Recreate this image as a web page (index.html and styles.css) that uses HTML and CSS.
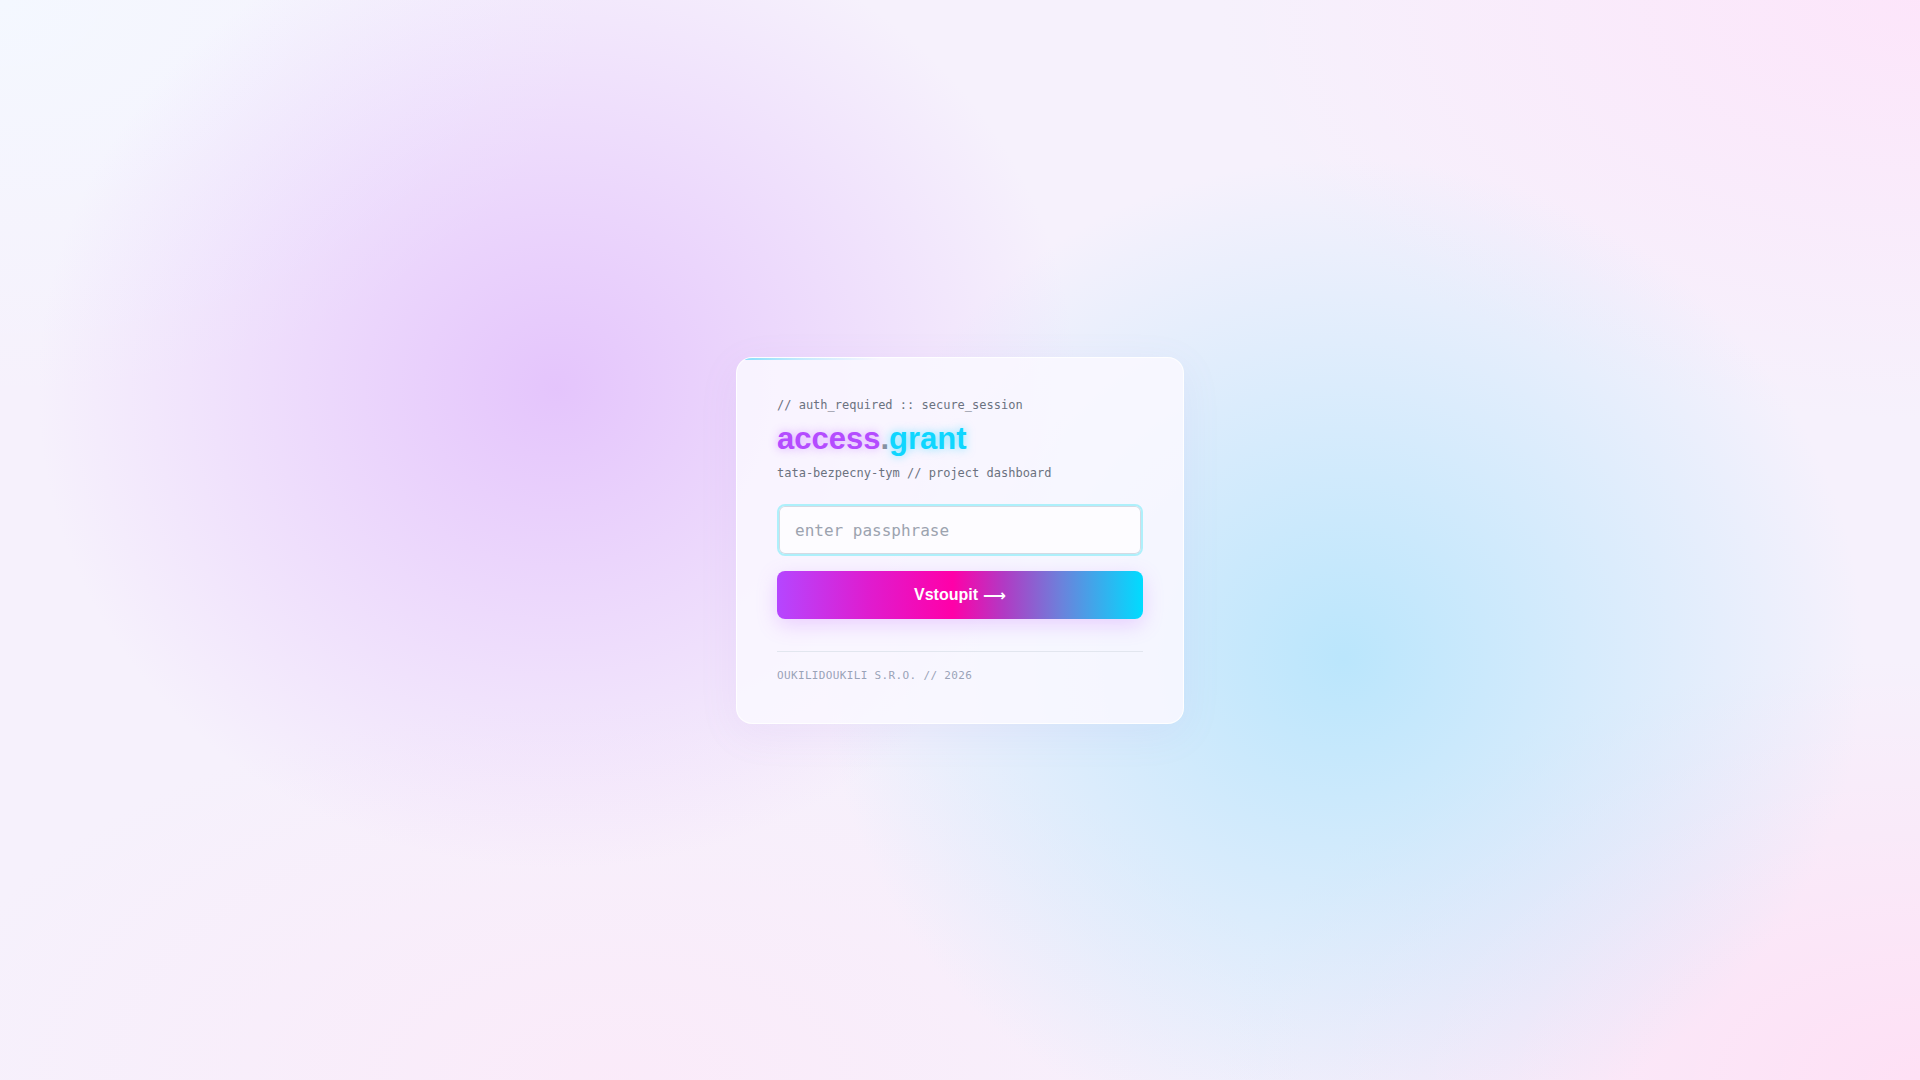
FILE: index.html
```html
<!DOCTYPE html>
<html lang="cs">
<head>
<meta charset="utf-8">
<title>access.grant</title>
<link rel="stylesheet" href="styles.css">
</head>
<body>
<main class="stage">
  <section class="card">
    <p class="kicker">// auth_required :: secure_session</p>
    <h1 class="title"><span class="t-a">access</span><span class="t-dot">.</span><span class="t-b">grant</span></h1>
    <p class="sub">tata-bezpecny-tym // project dashboard</p>
    <form class="form">
      <input class="pass" type="password" placeholder="enter passphrase">
      <button class="btn" type="button">Vstoupit <span class="arrow">⟶</span></button>
    </form>
    <div class="divider"></div>
    <p class="foot">OUKILIDOUKILI S.R.O. // 2026</p>
  </section>
</main>
</body>
</html>
```

FILE: styles.css
```css
* { box-sizing: border-box; }
html, body { margin: 0; height: 100%; }
body {
  font-family: "DejaVu Sans Mono", "Liberation Mono", monospace;
  background-color: #f6f1fc;
  background-image:
    radial-gradient(ellipse 520px 480px at 29% 36%, rgba(214, 160, 252, 0.55), rgba(214, 160, 252, 0) 100%),
    radial-gradient(ellipse 520px 500px at 70% 61%, rgba(176, 228, 252, 0.85), rgba(176, 228, 252, 0) 100%),
    radial-gradient(ellipse 700px 420px at 100% 100%, rgba(255, 222, 244, 0.9), rgba(255, 222, 244, 0) 100%),
    radial-gradient(ellipse 700px 420px at 100% 0%, rgba(253, 228, 250, 0.9), rgba(253, 228, 250, 0) 100%),
    radial-gradient(ellipse 700px 380px at 32% 100%, rgba(252, 232, 248, 0.7), rgba(252, 232, 248, 0) 100%),
    radial-gradient(ellipse 600px 400px at 0% 0%, rgba(244, 248, 255, 1), rgba(244, 248, 255, 0) 100%);
}
.stage {
  min-height: 100vh;
  display: flex;
  align-items: center;
  justify-content: center;
  padding-top: 1px;
}
.card {
  position: relative;
  overflow: hidden;
  width: 448px;
  padding: 39px 40px 39px;
  border-radius: 16px;
  background: rgba(250, 248, 255, 0.86);
  border: 1px solid rgba(255, 255, 255, 0.9);
  box-shadow: 0 10px 40px rgba(170, 130, 220, 0.08);
}
.card::before {
  content: "";
  position: absolute;
  left: 0; top: 0;
  width: 100%; height: 2px;
  background: linear-gradient(90deg, rgba(120, 220, 250, 0.9) 0%, rgba(150, 225, 250, 0.5) 15%, rgba(200, 230, 255, 0) 32%);
}
.kicker {
  margin: 0;
  font-size: 12px;
  line-height: 16px;
  color: #6b7280;
}
.title {
  margin: 8px 0 0;
  font-family: "Liberation Sans", Arial, sans-serif;
  font-weight: 700;
  font-size: 31px;
  line-height: 36px;
  letter-spacing: 0;
}
.t-a { color: #b44cff; text-shadow: 0 0 10px rgba(180, 76, 255, 0.45); }
.t-dot { color: #8a8fa0; }
.t-b { color: #0fd6ff; text-shadow: 0 0 10px rgba(0, 214, 255, 0.5); }
.sub {
  margin: 8px 0 0;
  font-size: 12px;
  line-height: 16px;
  color: #6b7280;
}
.form {
  margin-top: 23px;
  display: flex;
  flex-direction: column;
  gap: 15px;
}
.pass {
  width: 100%;
  height: 52px;
  padding: 0 16px;
  border-radius: 8px;
  border: 2px solid #aef0fb;
  box-shadow: inset 0 0 0 1px #d3dae4;
  background: #fdfcff;
  font-family: "DejaVu Sans Mono", "Liberation Mono", monospace;
  font-size: 16px;
  color: #374151;
  outline: none;
}
.pass::placeholder { color: #9ca3af; }
.btn {
  height: 48px;
  border: 0;
  border-radius: 8px;
  background: linear-gradient(90deg, #b546ff 0%, #df1ccf 25%, #ff00a8 48%, #b13ac4 62%, #6a83dc 78%, #00dcff 100%);
  box-shadow: 0 6px 20px rgba(190, 90, 255, 0.25);
  color: #fff;
  font-family: "Liberation Sans", Arial, sans-serif;
  font-weight: 700;
  font-size: 16px;
  display: flex;
  align-items: center;
  justify-content: center;
  gap: 5px;
}
.arrow { font-family: "DejaVu Sans", sans-serif; font-weight: 700; font-size: 16px; }
.divider {
  margin-top: 32px;
  height: 1px;
  background: #e2e6ef;
}
.foot {
  margin: 16px 0 0;
  font-size: 11px;
  line-height: 16px;
  letter-spacing: 0.35px;
  color: #9aa3b8;
}
```
